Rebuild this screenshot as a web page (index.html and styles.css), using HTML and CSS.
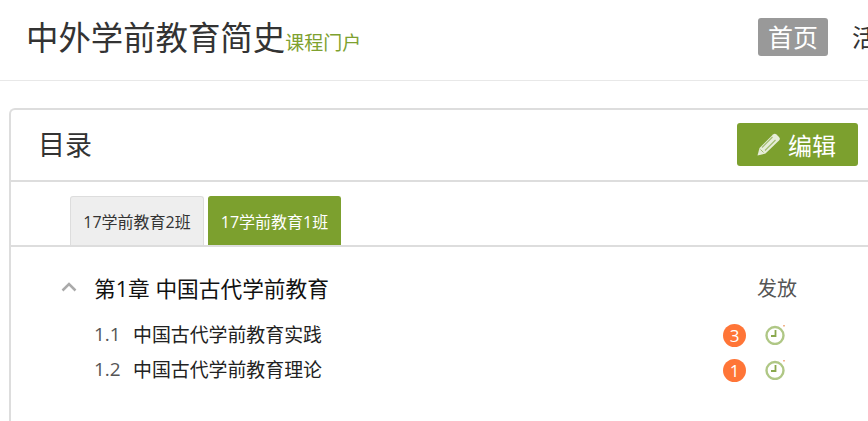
FILE: index.html
```html
<!DOCTYPE html>
<html lang="zh-CN">
<head>
    <meta charset="UTF-8">
    <meta name="viewport" content="width=device-width, initial-scale=1.0">
    <title>中外学前教育简史</title>
    <link rel="stylesheet" href="styles.css">
</head>
<body>
    <div class="header">
        <div class="brand">
            <span class="course-name">中外学前教育简史</span>
            <span class="course-sub">课程门户</span>
        </div>
        <div class="nav">
            <div class="nav-item active">首页</div>
            <div class="nav-item">活动</div>
        </div>
    </div>

    <div class="card">
        <div class="card-head">
            <div class="card-title">目录</div>
            <div class="edit-button">
                <svg class="edit-icon" viewBox="0 0 24 24"><path d="M0.500 23.500l2-7.500L16 2.500a2.500 2.500 0 0 1 3.500 0l2.500 2.500a2.500 2.500 0 0 1 0 3.500L8.500 21.500z" fill="#e6edd8"/><path d="M5 15.500L15.500 5M8 18.500L18.500 8" stroke="#a3bd70" stroke-width="1.200"/><path d="M3.500 17.500l3 3" stroke="#a3bd70" stroke-width="1"/></svg>
                <span>编辑</span>
            </div>
        </div>

        <div class="tabs">
            <div class="tab">17学前教育2班</div>
            <div class="tab selected">17学前教育1班</div>
        </div>

        <div class="chapter">
            <div class="chapter-row">
                <svg class="chevron" viewBox="0 0 16 10"><path d="M1.500 8.500L8 2l6.500 6.500" fill="none" stroke="#aaa" stroke-width="2.500"/></svg>
                <span class="chapter-name">第1章 中国古代学前教育</span>
                <span class="release">发放</span>
            </div>
            <div class="lesson">
                <span class="lesson-num">1.1</span>
                <span class="lesson-name">中国古代学前教育实践</span>
                <span class="badge">3</span>
                <svg class="clock" viewBox="0 0 20 20"><circle cx="10" cy="10.500" r="8.500" fill="none" stroke="#afc785" stroke-width="2.400"/><path d="M10.500 5v6H6" fill="none" stroke="#8aa84e" stroke-width="1.800"/><rect x="18" y="0" width="2" height="1.500" fill="#f2b48c"/></svg>
            </div>
            <div class="lesson">
                <span class="lesson-num">1.2</span>
                <span class="lesson-name">中国古代学前教育理论</span>
                <span class="badge">1</span>
                <svg class="clock" viewBox="0 0 20 20"><circle cx="10" cy="10.500" r="8.500" fill="none" stroke="#afc785" stroke-width="2.400"/><path d="M10.500 5v6H6" fill="none" stroke="#8aa84e" stroke-width="1.800"/><rect x="18" y="0" width="2" height="1.500" fill="#f2b48c"/></svg>
            </div>
        </div>
    </div>
</body>
</html>
```

FILE: styles.css
```css
html, body {
    overflow: hidden;
}

body {
    margin: 0;
    padding: 0;
    width: 868px;
    height: 421px;
    background-color: #fff;
    color: #333;
    font-family: "Open Sans", "Noto Sans CJK SC", sans-serif;
}

.header {
    height: 80px;
    border-bottom: 1px solid #e8e8e8;
    display: flex;
    justify-content: space-between;
    align-items: center;
    margin-bottom: 27px;
    padding-left: 26px;
}

.brand {
    display: flex;
    align-items: baseline;
    white-space: nowrap;
    padding-bottom: 6px;
}

.course-name {
    font-size: 32.4px;
    line-height: 40px;
}

.course-sub {
    font-size: 19px;
    color: #7ea12f;
}

.nav {
    display: flex;
    flex: 0 0 110px;
    gap: 14px;
    white-space: nowrap;
    overflow: hidden;
    padding-bottom: 6px;
}

.nav-item {
    font-size: 25px;
    line-height: 38px;
    padding: 0 10px;
    color: #333;
}

.nav-item.active {
    background-color: #999;
    color: #fff;
    border-radius: 3px;
}

.card {
    margin-left: 9px;
    width: 859px;
    height: 313px;
    border: 2px solid #ddd;
    border-right: none;
    border-bottom: none;
    border-radius: 6px 0 0 0;
    box-sizing: border-box;
}

.card-head {
    height: 70px;
    border-bottom: 2px solid #ddd;
    display: flex;
    justify-content: space-between;
    align-items: center;
    padding: 0 10px 0 27px;
}

.card-title {
    font-size: 27px;
    padding-bottom: 4px;
}

.edit-button {
    display: flex;
    align-items: center;
    gap: 7px;
    height: 43px;
    width: 121px;
    box-sizing: border-box;
    padding-left: 20px;
    margin-bottom: 2px;
    background-color: #7ca02e;
    color: #fff;
    font-size: 24px;
    border-radius: 3px;
}

.edit-icon {
    width: 24px;
    height: 24px;
}

.tabs {
    display: flex;
    gap: 4px;
    height: 49px;
    padding: 14px 0 0 59px;
    border-bottom: 2px solid #ddd;
}

.tab {
    width: 134px;
    height: 49px;
    box-sizing: border-box;
    font-size: 16px;
    line-height: 50px;
    text-align: center;
    white-space: nowrap;
    background-color: #eee;
    border: 1px solid #ddd;
    border-bottom: none;
    border-radius: 3px 3px 0 0;
}

.tab.selected {
    width: 133px;
    background-color: #7ca02e;
    border-color: #7ca02e;
    color: #fff;
}

.chapter {
    padding: 24px 0 0 50px;
}

.chapter-row {
    display: flex;
    align-items: center;
    height: 32px;
    margin-bottom: 13px;
}

.chevron {
    width: 16px;
    height: 10px;
    margin-right: 17px;
}

.chapter-name {
    width: 663px;
    font-size: 21.7px;
    color: #111;
    white-space: nowrap;
}

.release {
    font-size: 20px;
    color: #555;
}

.lesson {
    display: flex;
    align-items: center;
    height: 35px;
    padding-left: 33px;
}

.lesson-num {
    width: 39px;
    font-size: 19px;
    color: #555;
}

.lesson-name {
    width: 590px;
    font-size: 18.9px;
    color: #222;
    white-space: nowrap;
}

.badge {
    width: 23px;
    height: 23px;
    border-radius: 50%;
    background-color: #ff7537;
    color: #fff;
    font-size: 17px;
    line-height: 23px;
    text-align: center;
    margin-top: 3px;
    margin-right: 19px;
}

.clock {
    width: 20px;
    height: 20px;
    margin-top: 3px;
}
```
